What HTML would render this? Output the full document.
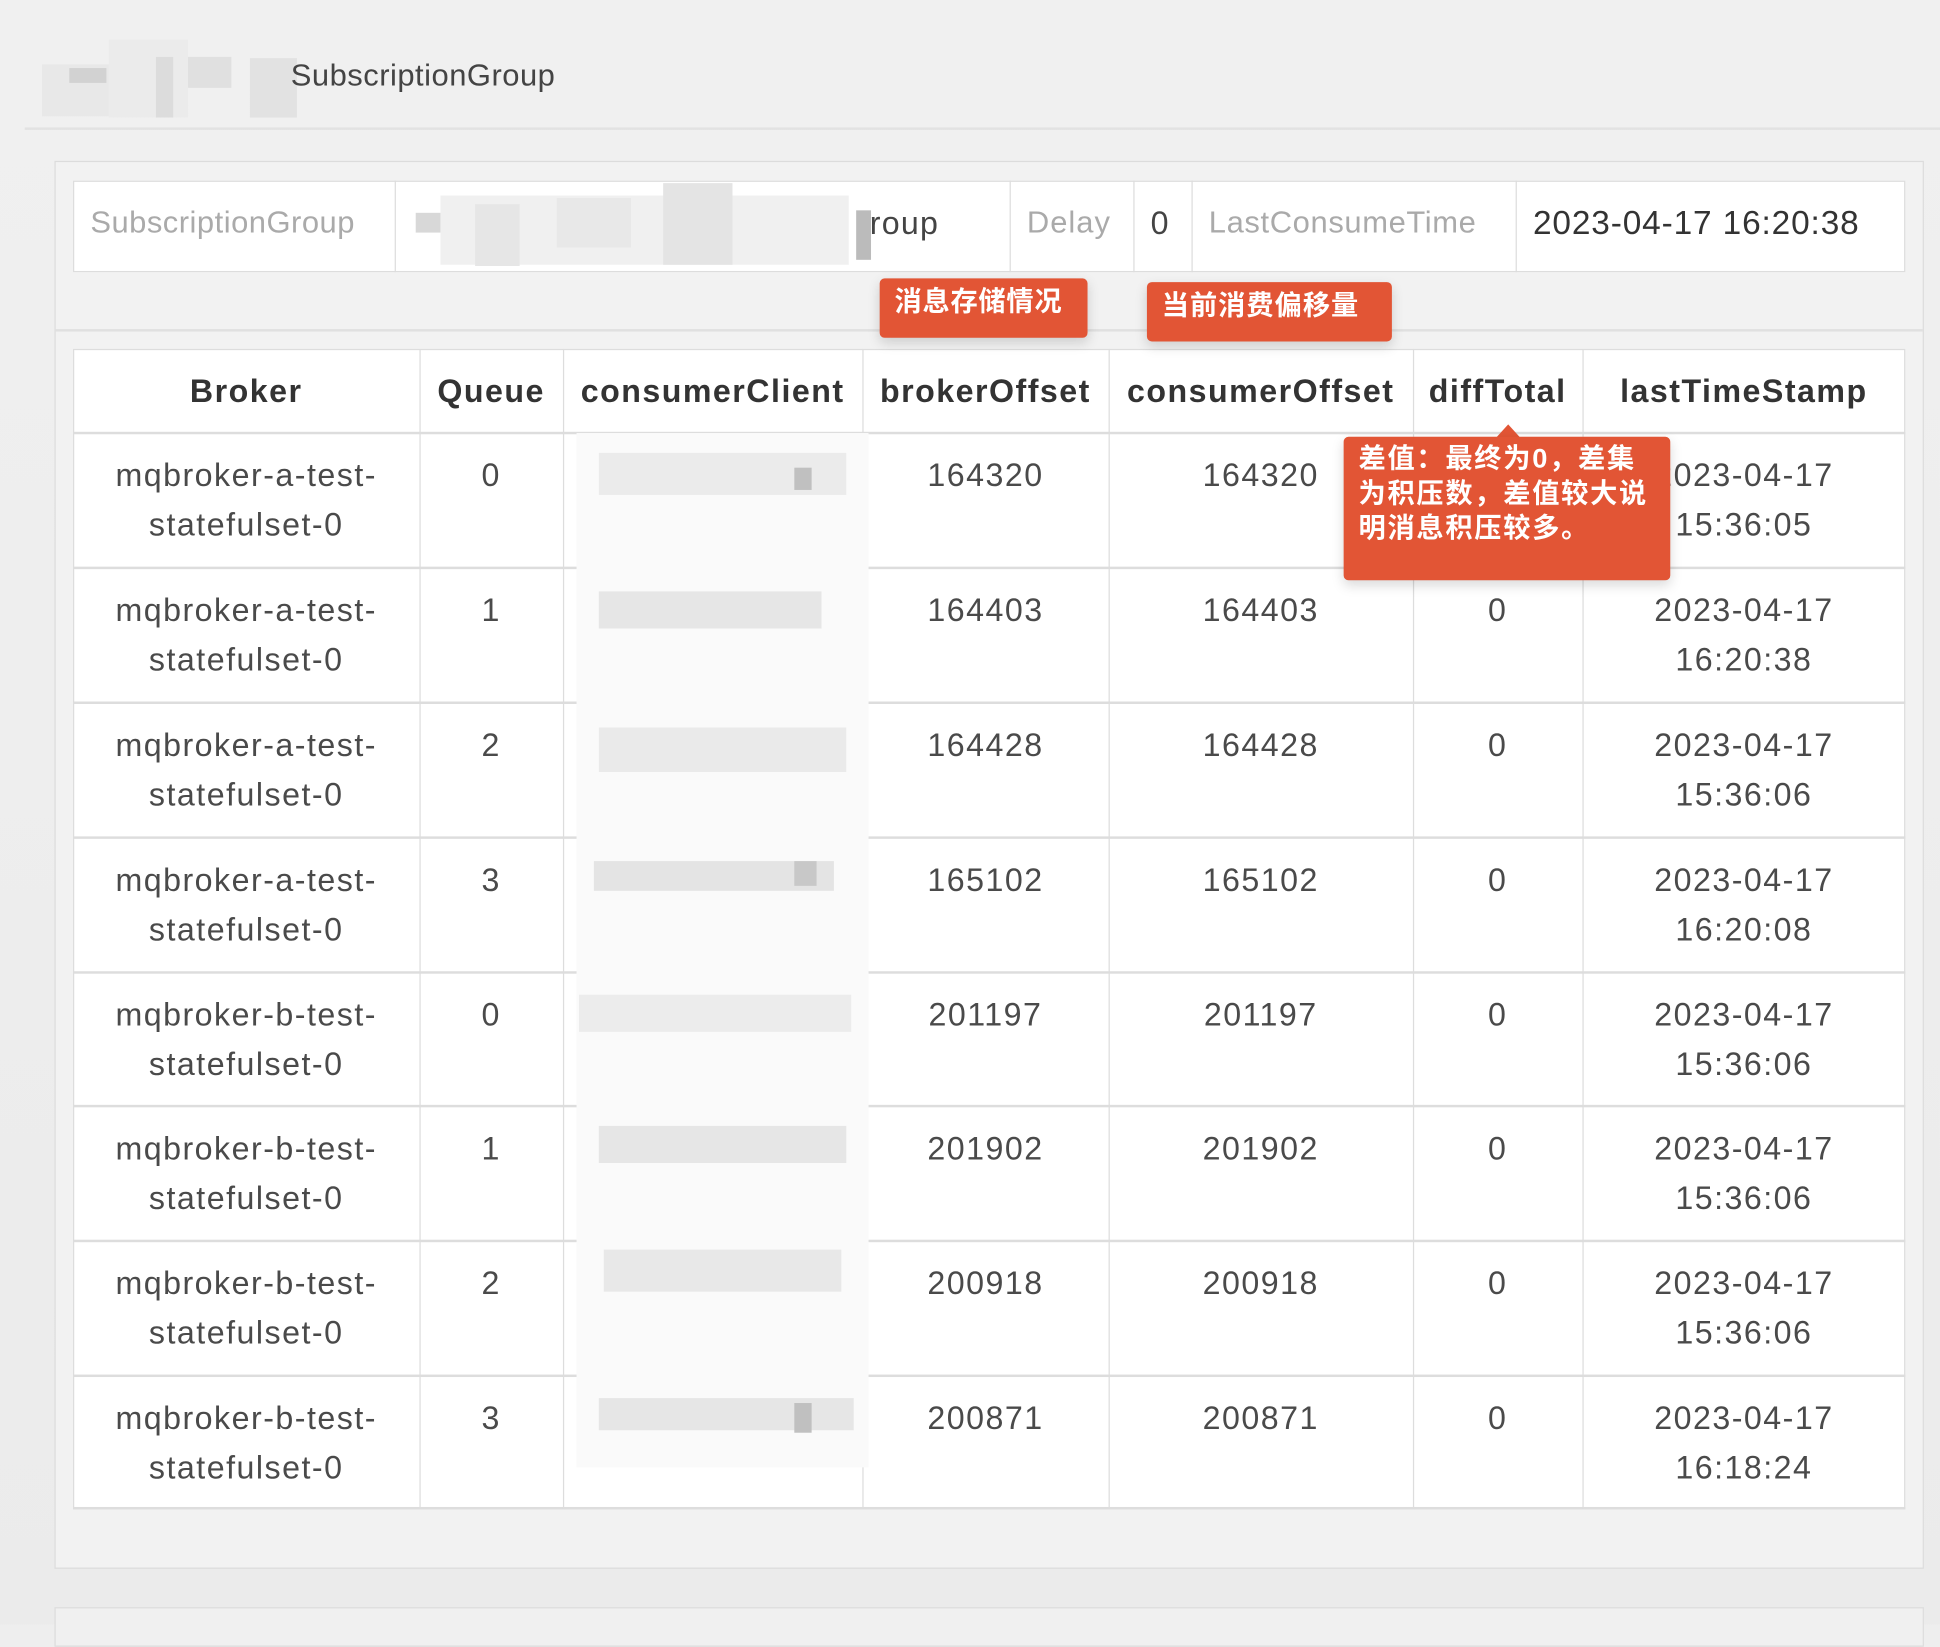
<!DOCTYPE html>
<html><head><meta charset="utf-8"><style>
html,body{margin:0;padding:0;width:1940px;height:1624px;overflow:hidden;background:#eeeeee;}
#w{position:absolute;left:0;top:0;width:1568px;height:1313px;transform:scale(1.23724);transform-origin:0 0;background:linear-gradient(#f0f0f0,#ebebeb);font-family:"Liberation Sans","Noto Sans CJK SC",sans-serif;}
.a{position:absolute;}
.b{position:absolute;background:#e6e6e6;}
.tx{position:absolute;font-size:26px;color:#4a4a4a;text-align:center;line-height:40px;letter-spacing:1.2px;}
.th{position:absolute;font-size:26px;color:#333;font-weight:bold;text-align:center;line-height:68px;top:282px;letter-spacing:1.2px;}
.vl{position:absolute;width:1px;background:#ddd;}
.hl{position:absolute;height:2px;background:#ddd;left:59px;width:1481px;}
.red{position:absolute;background:#e25535;color:#fff;font-weight:bold;font-size:22px;border-radius:4px;font-family:"Liberation Sans","Noto Sans CJK SC",sans-serif;box-shadow:0 4px 10px rgba(0,0,0,.15);}
</style></head><body><div id="w">
<div class="b" style="left:34px;top:52px;width:54px;height:42px;background:#e8e8e8"></div>
<div class="b" style="left:56px;top:55px;width:30px;height:12px;background:#d2d2d2"></div>
<div class="b" style="left:88px;top:32px;width:64px;height:63px;background:#ebebeb"></div>
<div class="b" style="left:126px;top:46px;width:14px;height:49px;background:#dcdcdc"></div>
<div class="b" style="left:152px;top:46px;width:35px;height:25px;background:#e0e0e0"></div>
<div class="b" style="left:202px;top:47px;width:38px;height:48px;background:#e2e2e2"></div>
<div class="a" style="left:235px;top:47px;font-size:25px;color:#444;letter-spacing:0.4px">SubscriptionGroup</div>
<div class="a" style="left:20px;top:103px;width:1548px;height:2px;background:#e2e2e2"></div>
<div class="a" style="left:44px;top:130px;width:1509px;height:1136px;border:1px solid #dcdcdc;background:#f2f2f2"></div>
<div class="a" style="left:45px;top:266px;width:1509px;height:2px;background:#e0e0e0"></div>
<div class="a" style="left:59px;top:146px;width:1479px;height:72px;border:1px solid #ddd;background:#fff"></div>
<div class="vl" style="left:319px;top:146px;height:74px"></div>
<div class="vl" style="left:816px;top:146px;height:74px"></div>
<div class="vl" style="left:916px;top:146px;height:74px"></div>
<div class="vl" style="left:963px;top:146px;height:74px"></div>
<div class="vl" style="left:1225px;top:146px;height:74px"></div>
<div class="a" style="left:73px;top:166px;font-size:25px;color:#aaa;letter-spacing:0.4px">SubscriptionGroup</div>
<div class="b" style="left:336px;top:172px;width:20px;height:16px;background:#d8d8d8"></div>
<div class="b" style="left:356px;top:158px;width:330px;height:56px;background:#f0f0f0"></div>
<div class="b" style="left:384px;top:165px;width:36px;height:50px;background:#e6e6e6"></div>
<div class="b" style="left:450px;top:160px;width:60px;height:40px;background:#e8e8e8"></div>
<div class="b" style="left:536px;top:148px;width:56px;height:66px;background:#e4e4e4"></div>
<div class="b" style="left:692px;top:170px;width:12px;height:40px;background:#bbb"></div>
<div class="a" style="left:703px;top:165px;font-size:26px;color:#444;letter-spacing:1px">roup</div>
<div class="a" style="left:830px;top:166px;font-size:25px;color:#aaa;letter-spacing:0.8px">Delay</div>
<div class="a" style="left:930px;top:165px;font-size:26px;color:#444">0</div>
<div class="a" style="left:977px;top:166px;font-size:25px;color:#aaa;letter-spacing:0.5px">LastConsumeTime</div>
<div class="a" style="left:1239px;top:165px;font-size:27px;color:#333;letter-spacing:0.7px">2023-04-17 16:20:38</div>
<div class="a" style="left:59px;top:282px;width:1479px;height:936px;border:1px solid #ddd;background:#fff"></div>
<div class="hl" style="top:349px"></div><div class="hl" style="top:458px"></div><div class="hl" style="top:567px"></div><div class="hl" style="top:676px"></div><div class="hl" style="top:785px"></div><div class="hl" style="top:893px"></div><div class="hl" style="top:1002px"></div><div class="hl" style="top:1111px"></div><div class="hl" style="top:1218px"></div>
<div class="vl" style="left:339px;top:282px;height:938px"></div>
<div class="vl" style="left:455px;top:282px;height:938px"></div>
<div class="vl" style="left:697px;top:282px;height:938px"></div>
<div class="vl" style="left:896px;top:282px;height:938px"></div>
<div class="vl" style="left:1142px;top:282px;height:938px"></div>
<div class="vl" style="left:1279px;top:282px;height:938px"></div>
<div class="th" style="left:59px;width:280px">Broker</div>
<div class="th" style="left:339px;width:116px">Queue</div>
<div class="th" style="left:455px;width:242px">consumerClient</div>
<div class="th" style="left:697px;width:199px">brokerOffset</div>
<div class="th" style="left:896px;width:246px">consumerOffset</div>
<div class="th" style="left:1142px;width:137px">diffTotal</div>
<div class="th" style="left:1279px;width:261px">lastTimeStamp</div>
<div class="a" style="left:466px;top:350px;width:236px;height:836px;background:#fafafa"></div>
<div class="b" style="left:484px;top:366px;width:200px;height:34px;background:#ebebeb"></div><div class="b" style="left:642px;top:378px;width:14px;height:18px;background:#c0c0c0"></div>
<div class="b" style="left:484px;top:478px;width:180px;height:30px;background:#e6e6e6"></div>
<div class="b" style="left:484px;top:588px;width:200px;height:36px;background:#eaeaea"></div>
<div class="b" style="left:480px;top:696px;width:194px;height:24px;background:#e4e4e4"></div><div class="b" style="left:642px;top:696px;width:18px;height:20px;background:#c8c8c8"></div>
<div class="b" style="left:468px;top:804px;width:220px;height:30px;background:#ececec"></div>
<div class="b" style="left:484px;top:910px;width:200px;height:30px;background:#e6e6e6"></div>
<div class="b" style="left:488px;top:1010px;width:192px;height:34px;background:#e8e8e8"></div>
<div class="b" style="left:484px;top:1130px;width:206px;height:26px;background:#e6e6e6"></div><div class="b" style="left:642px;top:1134px;width:14px;height:24px;background:#c0c0c0"></div>

<div class="tx" style="left:59px;width:280px;top:364px">mqbroker-a-test-<br>statefulset-0</div>
<div class="tx" style="left:59px;width:280px;top:473px">mqbroker-a-test-<br>statefulset-0</div>
<div class="tx" style="left:59px;width:280px;top:582px">mqbroker-a-test-<br>statefulset-0</div>
<div class="tx" style="left:59px;width:280px;top:691px">mqbroker-a-test-<br>statefulset-0</div>
<div class="tx" style="left:59px;width:280px;top:800px">mqbroker-b-test-<br>statefulset-0</div>
<div class="tx" style="left:59px;width:280px;top:908px">mqbroker-b-test-<br>statefulset-0</div>
<div class="tx" style="left:59px;width:280px;top:1017px">mqbroker-b-test-<br>statefulset-0</div>
<div class="tx" style="left:59px;width:280px;top:1126px">mqbroker-b-test-<br>statefulset-0</div>

<div class="tx" style="left:339px;width:116px;top:364px">0</div>
<div class="tx" style="left:339px;width:116px;top:473px">1</div>
<div class="tx" style="left:339px;width:116px;top:582px">2</div>
<div class="tx" style="left:339px;width:116px;top:691px">3</div>
<div class="tx" style="left:339px;width:116px;top:800px">0</div>
<div class="tx" style="left:339px;width:116px;top:908px">1</div>
<div class="tx" style="left:339px;width:116px;top:1017px">2</div>
<div class="tx" style="left:339px;width:116px;top:1126px">3</div>

<div class="tx" style="left:697px;width:199px;top:364px">164320</div>
<div class="tx" style="left:697px;width:199px;top:473px">164403</div>
<div class="tx" style="left:697px;width:199px;top:582px">164428</div>
<div class="tx" style="left:697px;width:199px;top:691px">165102</div>
<div class="tx" style="left:697px;width:199px;top:800px">201197</div>
<div class="tx" style="left:697px;width:199px;top:908px">201902</div>
<div class="tx" style="left:697px;width:199px;top:1017px">200918</div>
<div class="tx" style="left:697px;width:199px;top:1126px">200871</div>

<div class="tx" style="left:896px;width:246px;top:364px">164320</div>
<div class="tx" style="left:896px;width:246px;top:473px">164403</div>
<div class="tx" style="left:896px;width:246px;top:582px">164428</div>
<div class="tx" style="left:896px;width:246px;top:691px">165102</div>
<div class="tx" style="left:896px;width:246px;top:800px">201197</div>
<div class="tx" style="left:896px;width:246px;top:908px">201902</div>
<div class="tx" style="left:896px;width:246px;top:1017px">200918</div>
<div class="tx" style="left:896px;width:246px;top:1126px">200871</div>

<div class="tx" style="left:1142px;width:137px;top:473px">0</div>
<div class="tx" style="left:1142px;width:137px;top:582px">0</div>
<div class="tx" style="left:1142px;width:137px;top:691px">0</div>
<div class="tx" style="left:1142px;width:137px;top:800px">0</div>
<div class="tx" style="left:1142px;width:137px;top:908px">0</div>
<div class="tx" style="left:1142px;width:137px;top:1017px">0</div>
<div class="tx" style="left:1142px;width:137px;top:1126px">0</div>

<div class="tx" style="left:1279px;width:261px;top:364px">2023-04-17<br>15:36:05</div>
<div class="tx" style="left:1279px;width:261px;top:473px">2023-04-17<br>16:20:38</div>
<div class="tx" style="left:1279px;width:261px;top:582px">2023-04-17<br>15:36:06</div>
<div class="tx" style="left:1279px;width:261px;top:691px">2023-04-17<br>16:20:08</div>
<div class="tx" style="left:1279px;width:261px;top:800px">2023-04-17<br>15:36:06</div>
<div class="tx" style="left:1279px;width:261px;top:908px">2023-04-17<br>15:36:06</div>
<div class="tx" style="left:1279px;width:261px;top:1017px">2023-04-17<br>15:36:06</div>
<div class="tx" style="left:1279px;width:261px;top:1126px">2023-04-17<br>16:18:24</div>

<div class="red" style="left:711px;top:225px;width:168px;height:48px;line-height:38px;text-indent:12px;letter-spacing:0.6px">消息存储情况</div>
<div class="red" style="left:927px;top:228px;width:198px;height:48px;line-height:38px;text-indent:12px;letter-spacing:0.8px">当前消费偏移量</div>
<div class="a" style="left:1209px;top:343px;width:0;height:0;border-left:10px solid transparent;border-right:10px solid transparent;border-bottom:11px solid #e25535"></div>
<div class="red" style="left:1086px;top:353px;padding:4px 0 0 12px;line-height:28px;box-sizing:content-box;height:112px;width:252px;letter-spacing:1.4px">差值：最终为0，差集<br>为积压数，差值较大说<br>明消息积压较多。</div>

<div class="a" style="left:44px;top:1299px;width:1509px;height:30px;border:1px solid #dcdcdc;background:#f0f0f0"></div>
</div></body></html>
